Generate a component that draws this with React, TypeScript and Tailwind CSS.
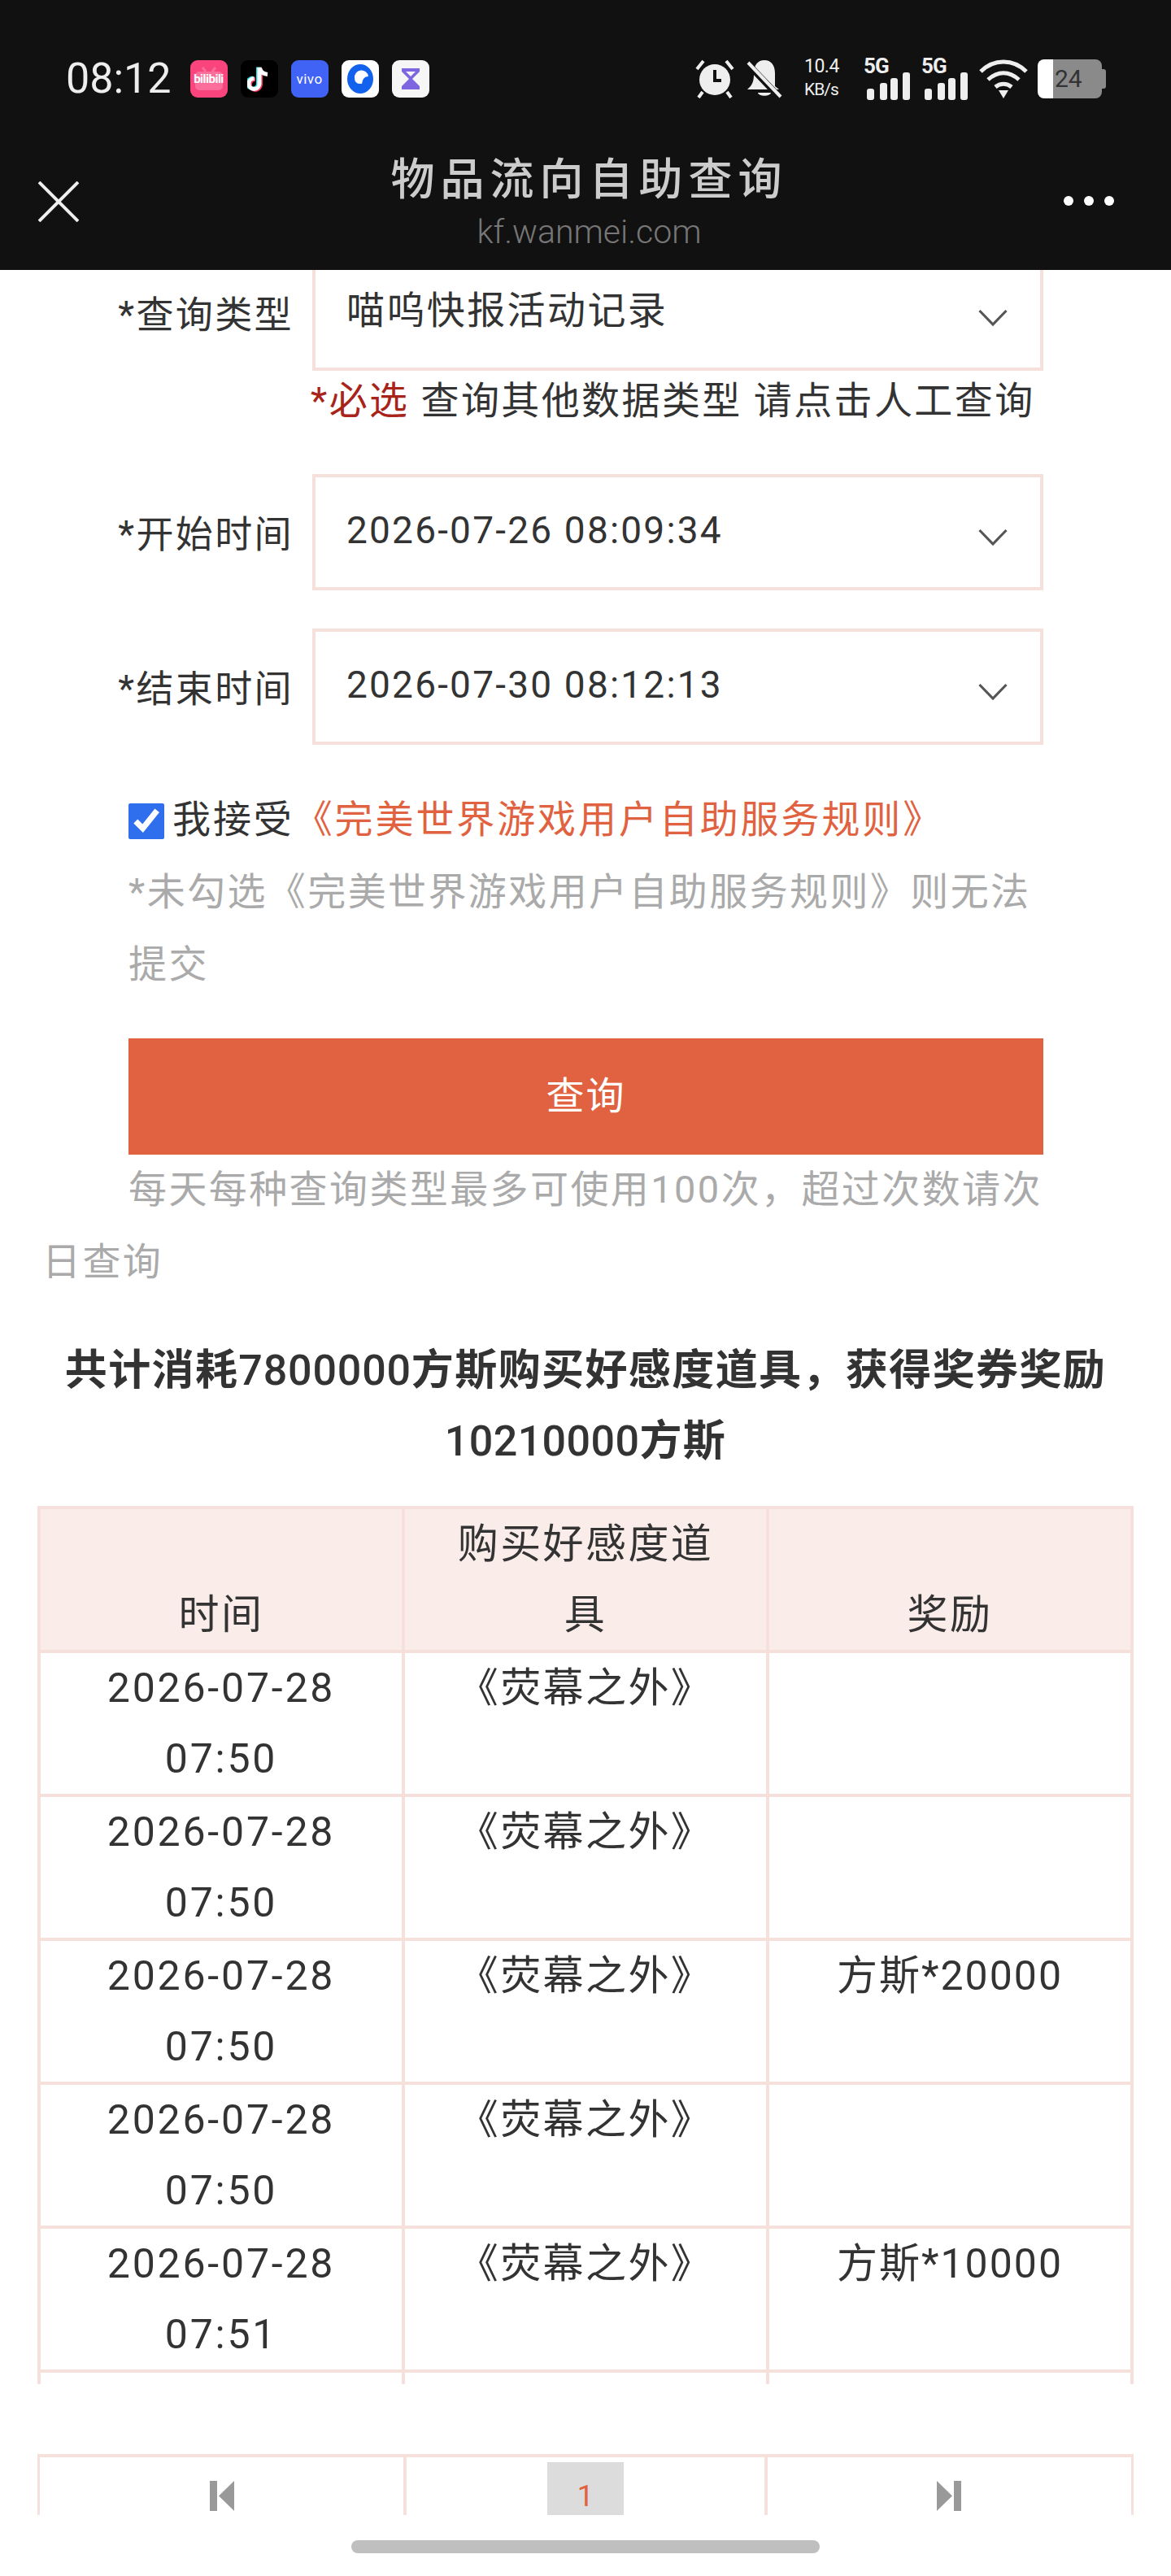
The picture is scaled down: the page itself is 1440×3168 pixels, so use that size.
import React from "react";

const Chevron = () => (
  <svg width="36" height="22" viewBox="0 0 36 22" fill="none" className="mt-3 shrink-0">
    <path d="M1.5 2 L18 19 L34.5 2" stroke="#555" strokeWidth="3.2" />
  </svg>
);

const Signal = () => (
  <div className="flex flex-col w-[57px] h-[52px]">
    <span className="text-[26px] leading-[20px] font-bold text-[#eee] h-[20px] tracking-[-1px]">5G</span>
    <svg width="57" height="34" viewBox="0 0 57 34" className="-mt-[2px]">
      <rect x="4" y="20" width="9" height="14" rx="3" fill="#eee" />
      <rect x="20" y="13" width="9" height="21" rx="3" fill="#eee" />
      <rect x="33" y="7" width="9" height="27" rx="3" fill="#eee" />
      <rect x="48" y="0" width="9" height="34" rx="3" fill="#eee" />
    </svg>
  </div>
);

const StatusBar = () => (
  <div className="flex items-center justify-between h-[50px] mt-[72px] pl-[81px] pr-[80px]">
    <div className="flex items-center">
      <span className="text-[52px] leading-[50px] text-[#eee] mr-[23px]">08:12</span>
      <div className="flex items-center gap-[16px]">
        <div className="relative w-[46px] h-[46px] rounded-[9px] bg-[#f9447e] flex items-center justify-center">
          <svg width="38" height="30" viewBox="0 0 38 30" fill="none" className="absolute left-[4px] top-[8px]">
            <rect x="2" y="6" width="34" height="23" rx="5" fill="#fb6d9a" />
            <path d="M11 1 L15 6 M27 1 L23 6" stroke="#fb6d9a" strokeWidth="3" />
          </svg>
          <span className="relative text-[15px] leading-none font-bold text-white tracking-[-0.5px]">bilibili</span>
        </div>
        <div className="w-[46px] h-[46px] rounded-[9px] bg-black flex items-center justify-center">
          <svg width="30" height="34" viewBox="0 0 30 34" fill="none">
            <path d="M15 3 V23 A6.5 6.5 0 1 1 8.5 16.5" stroke="#25e4e0" strokeWidth="5" transform="translate(-1.5 -0.5)" />
            <path d="M15 3 V23 A6.5 6.5 0 1 1 8.5 16.5" stroke="#f0355a" strokeWidth="5" transform="translate(1.5 1)" />
            <path d="M15 3 V23 A6.5 6.5 0 1 1 8.5 16.5 M15 3 C16 8 20 11 25 11.5" stroke="#fff" strokeWidth="5" />
          </svg>
        </div>
        <div className="w-[46px] h-[46px] rounded-[9px] bg-[#4062f5] flex items-center justify-center">
          <span className="text-[17px] leading-none text-white tracking-[0.5px]">vivo</span>
        </div>
        <div className="w-[46px] h-[46px] rounded-[9px] bg-white flex items-center justify-center">
          <svg width="34" height="38" viewBox="0 0 34 38">
            <ellipse cx="17" cy="19" rx="16" ry="18" fill="#1262ee" />
            <path d="M10 18 A8 8 0 0 1 27 16 Q20 16 19 25 Q10 26 10 18 Z" fill="#fff" />
          </svg>
        </div>
        <div className="w-[46px] h-[46px] rounded-[9px] bg-[#f6f6f6] flex items-center justify-center">
          <svg width="24" height="28" viewBox="0 0 24 28">
            <path d="M1 1 H23 V5 L14 14 L23 23 V27 H1 V23 L10 14 L1 5 Z" fill="#7d66e0" />
            <path d="M6 5 H18 L12 11 Z" fill="#f6f6f6" />
          </svg>
        </div>
      </div>
    </div>
    <div className="flex items-center">
      <svg width="48" height="48" viewBox="0 0 48 48" className="mr-[14px]">
        <circle cx="24" cy="25" r="19" fill="#eee" />
        <path d="M22 13 V28 H32 V24 H26 V13 Z" fill="#111" />
        <path d="M2 12 L10 2 M46 12 L38 2 M9 40 L4 47 M39 40 L44 47" stroke="#eee" strokeWidth="4" />
      </svg>
      <svg width="45" height="48" viewBox="0 0 45 48" className="mr-[27px]">
        <path d="M6 33 C10 28 10 22 10 17 C10 7 15 1 23 1 C31 1 36 7 36 17 L36 33 L41 37 H2 Z" fill="#eee" />
        <path d="M15 41 H31 C30 46 16 46 15 41 Z" fill="#eee" />
        <path d="M1 4 L42 47" stroke="#111" strokeWidth="8" />
        <path d="M3 4 L43 46" stroke="#eee" strokeWidth="4" />
      </svg>
      <div className="flex flex-col items-start w-[47px] mr-[26px] text-[#eee] -mt-[2px]">
        <span className="text-[23px] leading-[28px] tracking-[-0.5px]">10.4</span>
        <span className="text-[21px] leading-[28px] tracking-[-1px] whitespace-nowrap">KB/s</span>
      </div>
      <div className="mr-[14px]">
        <Signal />
      </div>
      <div className="mr-[14px]">
        <Signal />
      </div>
      <svg width="60" height="48" viewBox="0 0 60 48" fill="none" className="mr-[12px]">
        <path d="M2 15 C18 -1 42 -1 58 15" stroke="#eee" strokeWidth="5" />
        <path d="M11 25 C23 14 37 14 49 25" stroke="#eee" strokeWidth="5" />
        <path d="M20 34 C26 29 34 29 40 34" stroke="#eee" strokeWidth="5" />
        <path d="M24 38 H36 L30 48 Z" fill="#eee" />
      </svg>
      <div className="flex items-center">
        <div className="flex w-[79px] h-[48px] rounded-[8px] overflow-hidden">
          <div className="w-[19px] bg-white" />
          <div className="flex-1 bg-[#8a8a8a] text-[#333] text-[30px] leading-[48px] pl-[2px]">24</div>
        </div>
        <div className="w-[5px] h-[24px] bg-[#8a8a8a] rounded-r-[3px]" />
      </div>
    </div>
  </div>
);

const NavBar = () => (
  <div className="flex items-start mt-[95px] pl-[47px] pr-[70px]">
    <svg width="50" height="50" viewBox="0 0 50 50" fill="none" className="mt-[6px] shrink-0">
      <path d="M1 1 L49 49 M49 1 L1 49" stroke="#eee" strokeWidth="4" />
    </svg>
    <div className="flex-1 flex flex-col items-center -mt-[27px] pl-[44px]">
      <span className="text-[54px] leading-[64px] tracking-[7px] font-medium text-[#ccc] whitespace-nowrap">物品流向自助查询</span>
      <span className="text-[41px] leading-[44px] font-light text-[#777] mt-[9px]">kf.wanmei.com</span>
    </div>
    <div className="flex gap-[13px] mt-[24px] shrink-0">
      <div className="w-[12px] h-[12px] rounded-full bg-white" />
      <div className="w-[12px] h-[12px] rounded-full bg-white" />
      <div className="w-[12px] h-[12px] rounded-full bg-white" />
    </div>
  </div>
);

const FormRow = ({ label, value, latin }: { label: string; value: string; latin?: boolean }) => (
  <div className="flex items-center">
    <div className="w-[361px] text-right text-[46px] tracking-[2.4px] leading-[60px] mt-[4px]">{label}</div>
    <div className="ml-[23px] w-[899px] h-[143px] border-[4px] border-[#f5e0db] flex items-center justify-between pl-[38px] pr-[40px] bg-white">
      <span className={latin ? "text-[46px] leading-[60px] tracking-[2.2px] -mt-[6px]" : "text-[47px] leading-[60px] tracking-[2.4px] -mt-[6px]"}>{value}</span>
      <Chevron />
    </div>
  </div>
);

const rows = [
  { time: "07:50", reward: "" },
  { time: "07:50", reward: "" },
  { time: "07:50", reward: "方斯*20000" },
  { time: "07:50", reward: "" },
  { time: "07:51", reward: "方斯*10000" },
];

const RecordTable = () => (
  <div className="ml-[46px] w-[1348px] h-[1080px] overflow-hidden mt-[36px]">
    <table className="w-full table-fixed border-collapse text-[50px] leading-[86.5px] text-center tracking-[2.4px]">
      <thead>
        <tr className="bg-[#f9ece9]">
          <th className="font-normal align-bottom border-[4px] border-[#f5e0db]">时间</th>
          <th className="font-normal align-bottom border-[4px] border-[#f5e0db] px-[60px]">购买好感度道具</th>
          <th className="font-normal align-bottom border-[4px] border-[#f5e0db]">奖励</th>
        </tr>
      </thead>
      <tbody>
        {rows.map((r, i) => (
          <tr key={i}>
            <td className="align-top border-[4px] border-[#f5e0db] tracking-[2.8px]">
              2026-07-28
              <br />
              {r.time}
            </td>
            <td className="align-top border-[4px] border-[#f5e0db]">《荧幕之外》</td>
            <td className="align-top border-[4px] border-[#f5e0db] tracking-[2px]">{r.reward}</td>
          </tr>
        ))}
        <tr>
          <td className="border-[4px] border-[#f5e0db] h-[172px]" />
          <td className="border-[4px] border-[#f5e0db]" />
          <td className="border-[4px] border-[#f5e0db]" />
        </tr>
      </tbody>
    </table>
  </div>
);

const Pager = () => (
  <div className="ml-[46px] w-[1348px] h-[75px] overflow-hidden mt-[86px] grid grid-cols-3 border-x-[3px] border-t-[4px] border-[#f5e0db]">
    <div className="flex justify-center pt-[29px]">
      <svg width="30" height="37" viewBox="0 0 30 37">
        <rect x="0" y="0" width="9" height="37" fill="#999" />
        <path d="M30 0 V37 L11 18.5 Z" fill="#999" />
      </svg>
    </div>
    <div className="flex justify-center border-x-[4px] border-[#f5e0db] pt-[6px]">
      <div className="w-[94px] h-[65px] bg-[#dcdcdc] text-center text-[#e06240] text-[36px] leading-[40px] pt-[22px]">1</div>
    </div>
    <div className="flex justify-center pt-[29px]">
      <svg width="30" height="37" viewBox="0 0 30 37">
        <path d="M0 0 V37 L19 18.5 Z" fill="#999" />
        <rect x="21" y="0" width="9" height="37" fill="#999" />
      </svg>
    </div>
  </div>
);

export default function App() {
  return (
    <div className="w-[1440px] h-[3168px] overflow-hidden bg-white text-[#333] font-['Roboto','Noto_Sans_CJK_SC',sans-serif]">
      <div className="h-[332px] bg-[#111] overflow-hidden">
        <StatusBar />
        <NavBar />
      </div>

      <div className="h-[2762px] overflow-hidden">
        <div className="-mt-[19px]">
          <FormRow label="*查询类型" value="喵呜快报活动记录" />
        </div>
        <div className="pl-[382px] text-[47px] leading-[60px] tracking-[2.4px] mt-[7px] whitespace-nowrap">
          <span className="text-[#a8231a]">*必选</span> 查询其他数据类型 请点击人工查询
        </div>
        <div className="mt-[60px]">
          <FormRow label="*开始时间" value="2026-07-26 08:09:34" latin />
        </div>
        <div className="mt-[47px]">
          <FormRow label="*结束时间" value="2026-07-30 08:12:13" latin />
        </div>

        <div className="ml-[158px] w-[1125px] mt-[48px]">
          <div className="flex items-center h-[88px]">
            <input type="checkbox" checked readOnly className="w-[44px] h-[44px] m-0 mr-[10px] mt-[4px] accent-[#2f6fed]" />
            <span className="text-[47px] tracking-[2.9px] whitespace-nowrap">
              我接受<span className="text-[#e06240]">《完美世界游戏用户自助服务规则》</span>
            </span>
          </div>
          <p className="text-[47px] leading-[89px] tracking-[2.4px] text-[#aaa]">
            *未勾选《完美世界游戏用户自助服务规则》则无法提交
          </p>
          <div className="h-[143px] bg-[#e06240] text-white text-[47px] tracking-[2px] flex items-center justify-center mt-[47px]">
            查询
          </div>
        </div>

        <p className="pl-[52px] indent-[106px] text-[47px] leading-[89px] tracking-[2.4px] text-[#aaa] mt-[-2px] whitespace-nowrap">
          每天每种查询类型最多可使用100次，超过次数请次
          <br />
          <span className="-ml-[106px] inline-block">日查询</span>
        </p>

        <h2 className="text-[52px] leading-[87px] tracking-[1.4px] font-bold text-center px-[40px] mt-[46px] whitespace-nowrap">
          共计消耗<span className="font-medium tracking-[0.8px]">7800000</span>方斯购买好感度道具，获得奖券奖励
          <br />
          <span className="font-medium tracking-[0.4px]">10210000</span>方斯
        </h2>

        <RecordTable />
        <Pager />
      </div>

      <div className="pt-[30px]">
        <div className="mx-auto w-[576px] h-[16px] rounded-full bg-[#bfbfbf]" />
      </div>
    </div>
  );
}
